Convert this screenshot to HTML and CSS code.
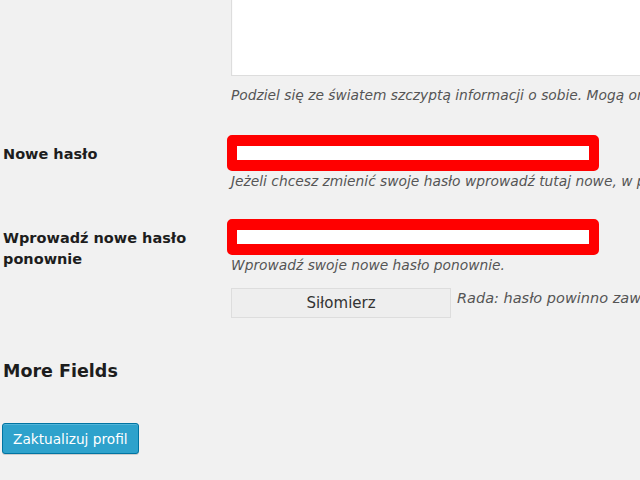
FILE: index.html
```
<!DOCTYPE html>
<html lang="pl">
<head>
<meta charset="utf-8">
<title>Profil</title>
<link rel="stylesheet" href="styles.css">
</head>
<body>
<div class="page">
  <div class="row row-bio">
    <div class="label"></div>
    <div class="field">
      <div class="bio-box"></div>
      <p class="desc desc-bio">Podziel się ze światem szczyptą informacji o sobie. Mogą one zostać wyświetlone publicznie.</p>
    </div>
  </div>

  <div class="row row-pass1">
    <div class="label label-pass1">Nowe hasło</div>
    <div class="field">
      <div class="pass-input"><span class="pass-inner"></span></div>
      <p class="desc desc-pass1">Jeżeli chcesz zmienić swoje hasło wprowadź tutaj nowe, w przeciwnym wypadku pozostaw to pole puste.</p>
    </div>
  </div>

  <div class="row row-pass2">
    <div class="label label-pass2">Wprowadź nowe hasło ponownie</div>
    <div class="field">
      <div class="pass-input"><span class="pass-inner"></span></div>
      <p class="desc desc-pass2">Wprowadź swoje nowe hasło ponownie.</p>
      <div class="strength-row">
        <div class="strength">Siłomierz</div>
        <p class="hint">Rada: hasło powinno zawierać co najmniej siedem znaków.</p>
      </div>
    </div>
  </div>

  <h2 class="section-title">More Fields</h2>

  <button class="submit" type="button">Zaktualizuj profil</button>
</div>
</body>
</html>
```

FILE: styles.css
```
html, body {
  margin: 0;
  padding: 0;
  background: #f1f1f1;
  overflow: hidden;
}

body {
  width: 640px;
  height: 480px;
  font-family: "DejaVu Sans", "Liberation Sans", sans-serif;
  color: #222;
}

.page {
  padding-left: 3px;
}

.row {
  display: flex;
  align-items: flex-start;
}

.label {
  width: 200px;
  flex: 0 0 200px;
  font-size: 14.5px;
  font-weight: bold;
  line-height: 21px;
  color: #1d1d1d;
}

.field {
  margin-left: 28px;
  flex: 1 1 auto;
  min-width: 0;
}

.bio-box {
  margin-top: -20px;
  height: 94px;
  width: 500px;
  background: #fff;
  border: 1px solid #ddd;
  box-shadow: inset 0 1px 2px rgba(0,0,0,0.07);
}

.desc {
  margin: 0;
  font-size: 13.8px;
  line-height: 20px;
  font-style: italic;
  color: #555;
  white-space: nowrap;
}

.desc-bio {
  margin-top: 9px;
}

.row-pass1 {
  margin-top: 30px;
}

.label-pass1 {
  padding-top: 9px;
}

.pass-input {
  margin-left: -4px;
  width: 352px;
  height: 14px;
  border: 11px solid #ff0000;
  border-left-width: 10px;
  border-right-width: 10px;
  border-radius: 5px;
  background: #fff;
}

.pass-inner {
  display: block;
}

.desc-pass1 {
  margin-top: 0;
}

.row-pass2 {
  margin-top: 28px;
}

.label-pass2 {
  padding-top: 9px;
}

.desc-pass2 {
  margin-top: 0;
}

.strength-row {
  display: flex;
  align-items: flex-start;
  gap: 6px;
  margin-top: 13px;
}

.strength {
  flex: 0 0 auto;
  width: 218px;
  height: 28px;
  line-height: 28px;
  text-align: center;
  font-size: 15px;
  color: #333;
  background: #eee;
  border: 1px solid #ddd;
}

.hint {
  margin: 0;
  font-size: 14.5px;
  line-height: 20px;
  font-style: italic;
  color: #555;
  white-space: nowrap;
}

.section-title {
  margin: 41px 0 0 0;
  font-size: 17.5px;
  line-height: 24px;
  font-weight: bold;
  color: #1d1d1d;
}

.submit {
  display: block;
  margin-top: 40px;
  margin-left: -1px;
  height: 31px;
  padding: 0 10px;
  font-family: "DejaVu Sans", "Liberation Sans", sans-serif;
  font-size: 13.7px;
  color: #fff;
  background: #2ea2cc;
  border: 1px solid #0074a2;
  border-radius: 3px;
  box-shadow: inset 0 1px 0 rgba(120,200,230,0.5), 0 1px 0 rgba(0,0,0,0.15);
  cursor: pointer;
}
```
